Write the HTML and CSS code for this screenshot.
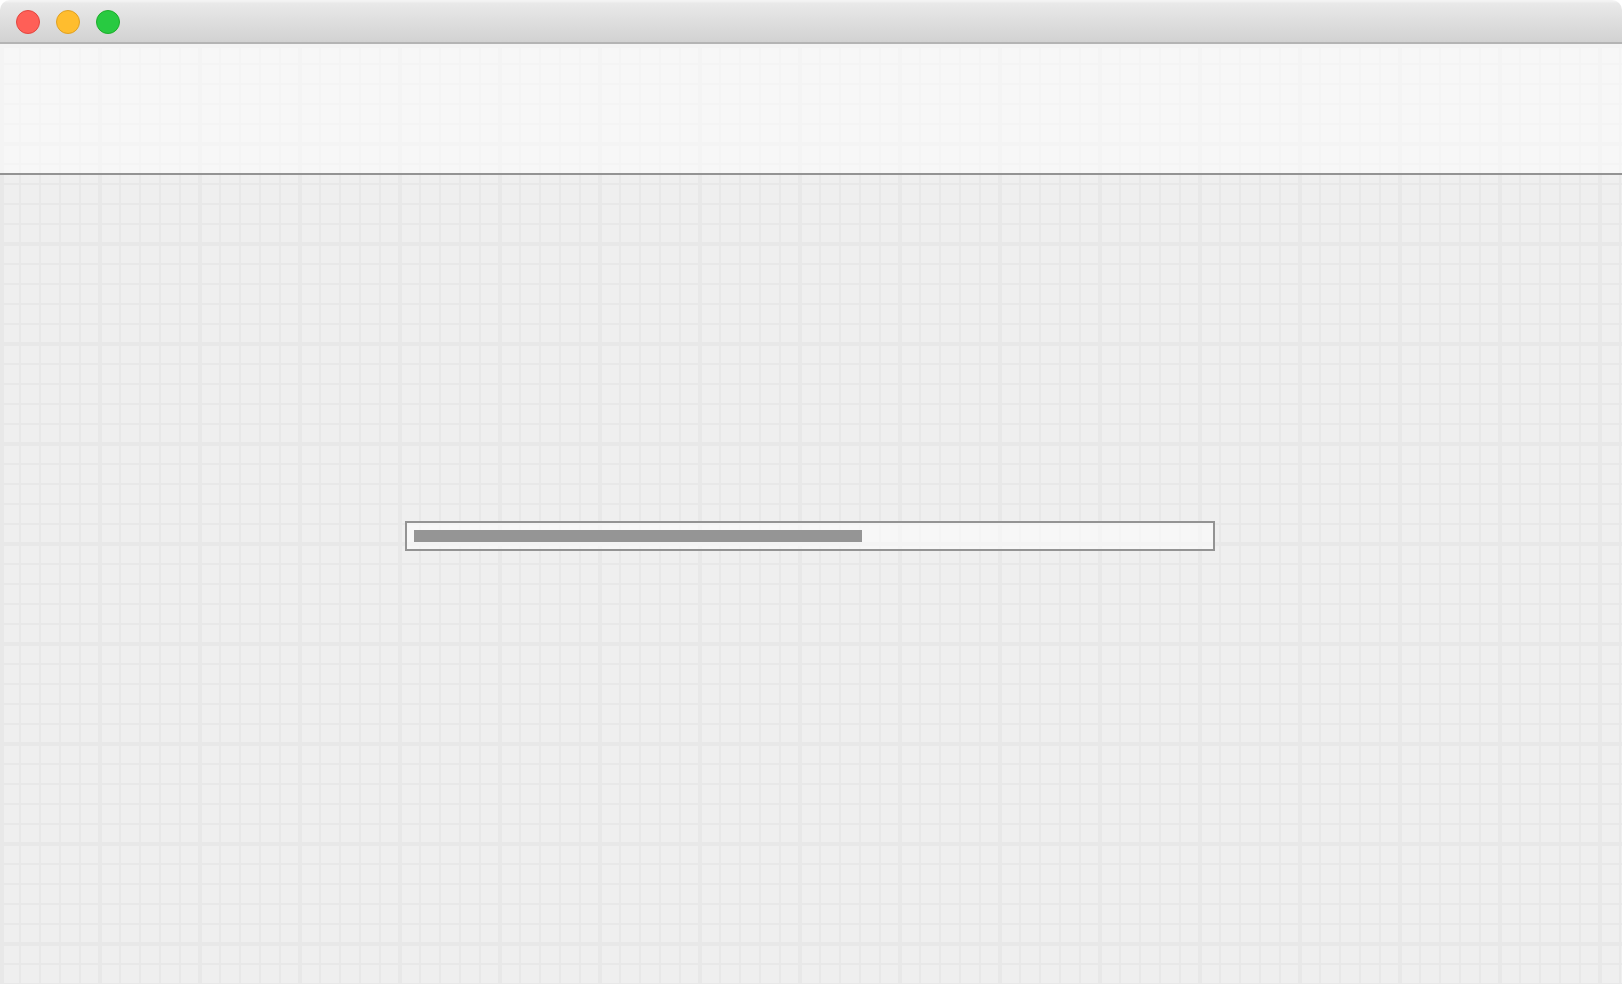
FILE: index.html
```html
<!DOCTYPE html>
<html lang="en">
<head>
<meta charset="utf-8">
<title>Loading</title>
<link rel="stylesheet" href="styles.css">
</head>
<body>
<div class="window">
  <header class="titlebar">
    <button class="dot dot-close" type="button" aria-label="Close"></button>
    <button class="dot dot-minimize" type="button" aria-label="Minimize"></button>
    <button class="dot dot-zoom" type="button" aria-label="Zoom"></button>
  </header>
  <div class="canvas">
    <div class="toolbar"></div>
    <main class="content">
      <progress class="progress" max="792" value="448" aria-label="Loading"></progress>
    </main>
  </div>
</div>
</body>
</html>
```

FILE: styles.css
```css
* {
  box-sizing: border-box;
}

body {
  margin: 0;
  background: #fff;
  font-family: "Liberation Sans", sans-serif;
}

.window {
  display: flex;
  flex-direction: column;
  min-height: 100vh;
  overflow: hidden;
  border-radius: 10px 10px 0 0;
}

.titlebar {
  display: flex;
  align-items: center;
  gap: 16px;
  height: 44px;
  padding: 0 16px;
  border-bottom: 2px solid #b4b4b4;
  background: linear-gradient(#f4f4f4 0, #f0f0f0 2px, #e9e9e9 3px, #d2d2d2 100%);
}

.dot {
  width: 24px;
  height: 24px;
  padding: 0;
  margin-top: 2px;
  border: 1px solid;
  border-radius: 50%;
}

.dot-close {
  border-color: #e2463f;
  background: #ff5f57;
}

.dot-minimize {
  border-color: #dfa023;
  background: #ffbd2e;
}

.dot-zoom {
  border-color: #1dad2b;
  background: #28ca41;
}

/* Grid paper: a line every 20px, a heavier one every 100px */
.canvas {
  display: flex;
  flex: 1;
  flex-direction: column;
  background-color: #efefef;
  background-image:
    linear-gradient(#e8e8e8, #e8e8e8),
    linear-gradient(#e8e8e8, #e8e8e8),
    linear-gradient(90deg, #e8e8e8 4px, transparent 4px),
    linear-gradient(#e8e8e8 4px, transparent 4px),
    linear-gradient(90deg, #e8e8e8 2px, transparent 2px),
    linear-gradient(#e8e8e8 2px, transparent 2px);
  background-size: 4px 100%, 100% 4px, 100px 100px, 100px 100px, 20px 20px, 20px 20px;
  background-position: 0 0, 0 0, -2px -2px, -2px -2px, -1px -1px, -1px -1px;
  background-repeat: no-repeat, no-repeat, repeat, repeat, repeat, repeat;
}

.toolbar {
  height: 131px;
  border-bottom: 2px solid #939393;
  background: rgba(255, 255, 255, 0.5) padding-box;
}

.content {
  flex: 1;
  padding: 346px 2px 0 0;
}

.progress {
  display: block;
  width: 50%;
  height: 30px;
  margin: 0 auto;
  padding: 7px;
  border: 2px solid #939393;
  background: rgba(255, 255, 255, 0.5) padding-box;
  appearance: none;
}

.progress::-webkit-progress-bar {
  background: transparent;
}

.progress::-webkit-progress-value {
  background: #959595;
}

.progress::-moz-progress-bar {
  background: #959595;
}
```
